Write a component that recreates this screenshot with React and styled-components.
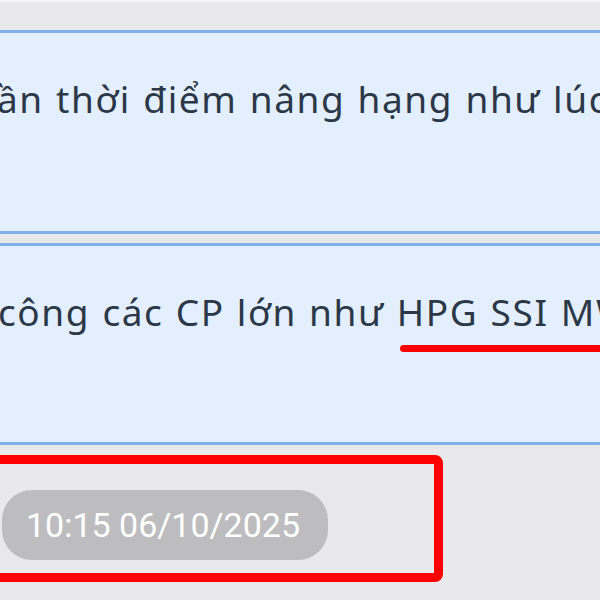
import styled, { createGlobalStyle } from "styled-components";

const GlobalStyle = createGlobalStyle`
  html, body {
    margin: 0;
    padding: 0;
    background: #e9e9ec;
    overflow: hidden;
  }
`;

const Page = styled.div`
  width: 600px;
  height: 600px;
  box-sizing: border-box;
  border-top: 2px solid #f6f6f8;
  padding-top: 28px;
  overflow: hidden;
  display: flex;
  flex-direction: column;
  gap: 9px;
`;

const Bubble = styled.div`
  margin: 0 -12px;
  height: ${({ $h }) => $h}px;
  box-sizing: border-box;
  background: #e4effd;
  border-top: 3px solid #7fb0ea;
  border-bottom: 3px solid #7fb0ea;
  padding: 40px 0 0 ${({ $indent }) => $indent}px;
  overflow: hidden;
  white-space: nowrap;
  font-family: "Noto Sans", sans-serif;
  font-size: 37px;
  letter-spacing: 1.6px;
  word-spacing: 1px;
  color: #2c3748;
`;

const Marked = styled.span`
  position: relative;

  &::after {
    content: "";
    position: absolute;
    left: 3px;
    right: -60px;
    bottom: -15px;
    height: 7px;
    border-radius: 4px;
    background: #ff0000;
  }
`;

const Frame = styled.div`
  margin: 1px 0 0 -30px;
  width: 473px;
  height: 127px;
  box-sizing: border-box;
  border: 9px solid #ff0000;
  border-radius: 8px;
  padding: 26px 0 0 23px;
`;

const TimePill = styled.div`
  display: inline-flex;
  align-items: center;
  height: 70px;
  box-sizing: border-box;
  padding: 0 28px 0 24px;
  border-radius: 30px;
  background: #bdbdbf;
  color: #ffffff;
  font-family: Roboto, "Liberation Sans", sans-serif;
  font-size: 34px;
`;

export default function App() {
  return (
    <>
      <GlobalStyle />
      <Page>
        <Bubble $h={204} $indent={9}>
          ần thời điểm nâng hạng như lúc
        </Bubble>
        <Bubble $h={202} $indent={10}>
          công các CP lớn như <Marked>HPG SSI MWG</Marked>
        </Bubble>
        <Frame>
          <TimePill>10:15 06/10/2025</TimePill>
        </Frame>
      </Page>
    </>
  );
}
